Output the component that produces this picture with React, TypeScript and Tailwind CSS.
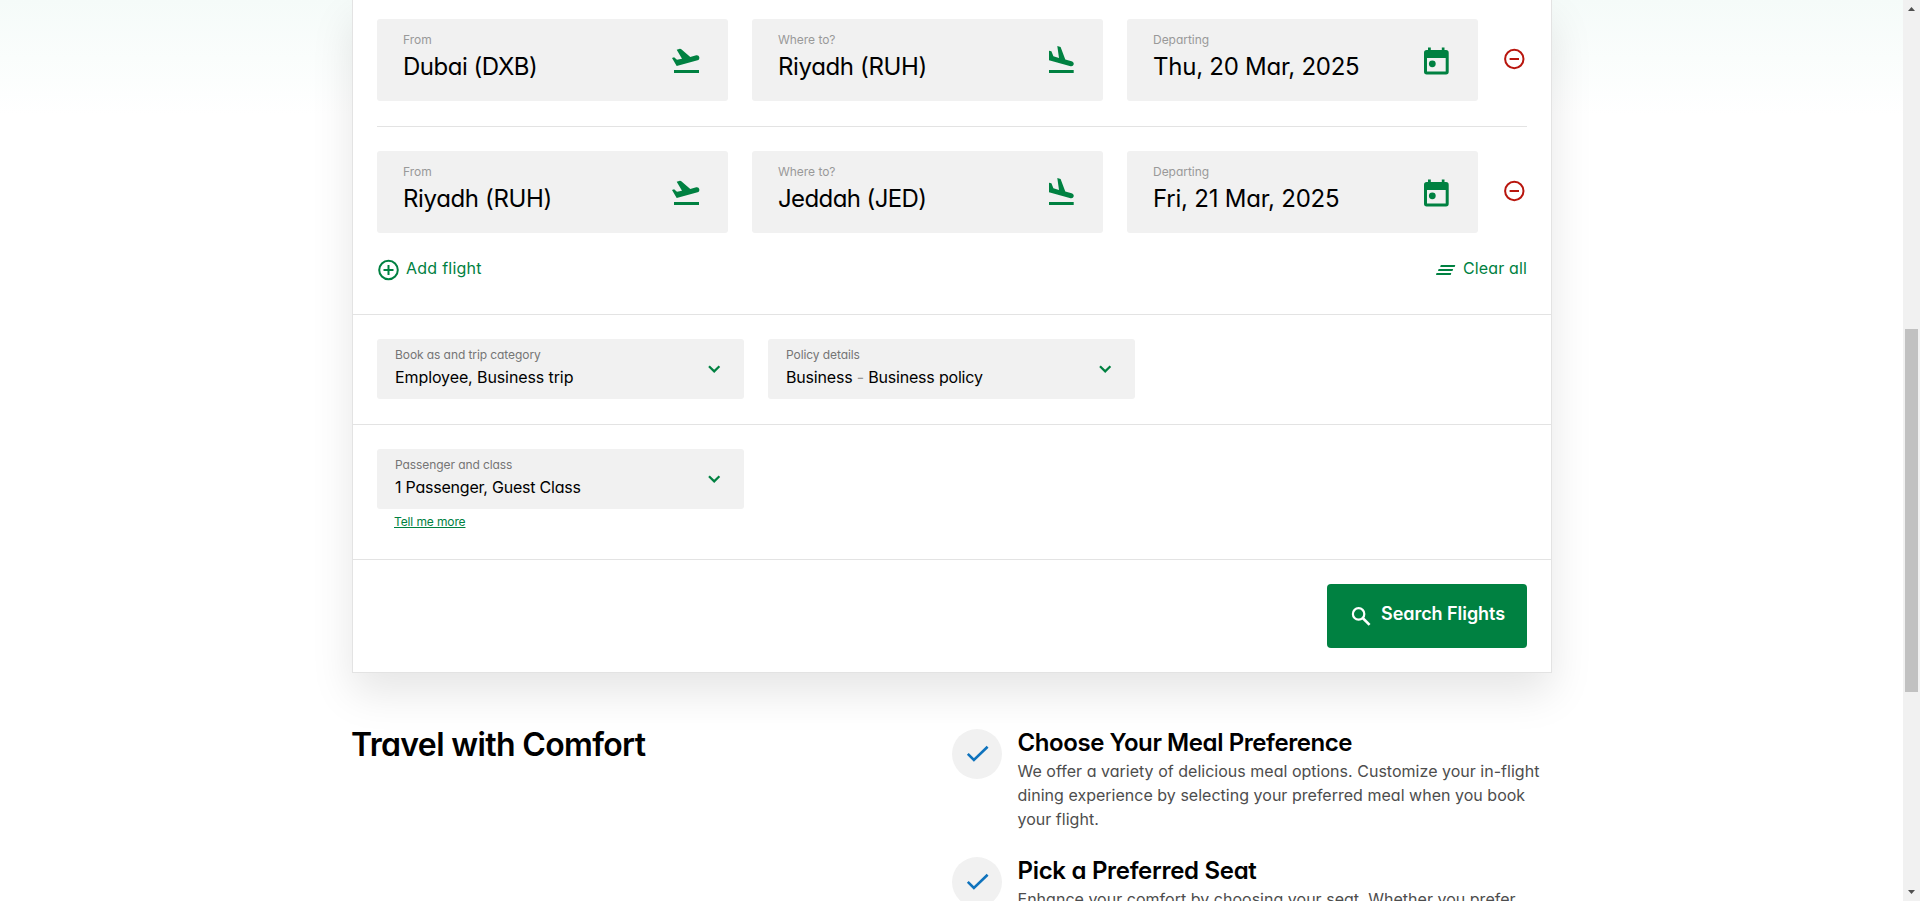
import type { ReactNode } from "react";

function TakeoffIcon() {
  return (
    <svg viewBox="0 0 32 32" className="size-8" fill="currentColor">
      <path d="M1 13L3.100 12.300L6 14.800L11 13.700L5.700 4.700L8.900 3.700L10 4L19.300 11.900L25.200 10.300C26.800 9.900 28 10.800 28.300 12.200C28.600 13.600 27.900 15 26.600 15.300L5.700 21z" />
      <path d="M3 25h25v3H3z" />
    </svg>
  );
}

function LandIcon() {
  return (
    <svg viewBox="0 0 32 32" className="size-8" fill="currentColor">
      <path d="M3 5.800L5.400 6.300L7.400 11.300L13 12.900L11.300 1L14.600 1.900L19.300 14.500L25.600 16.300C27.100 16.700 28 17.900 27.700 19.300C27.400 20.800 26 21.600 24.600 21.200L3 15.300z" />
      <path d="M3 25h24.700v3H3z" />
    </svg>
  );
}

function CalendarIcon() {
  return (
    <svg viewBox="0 0 32 32" className="size-8">
      <path
        fill="currentColor"
        fillRule="evenodd"
        d="M7 2.500h2.800V5h11V2.500h2.700V5h1.500a2.700 2.700 0 0 1 2.700 2.700v19a2.700 2.700 0 0 1-2.700 2.700H5.700A2.700 2.700 0 0 1 3 26.700v-19A2.700 2.700 0 0 1 5.700 5H7zM6 13v13.600h18.700V13z"
      />
      <circle cx="11.300" cy="18.800" r="3.400" fill="currentColor" />
    </svg>
  );
}

function RemoveIcon() {
  return (
    <svg viewBox="0 0 25 25" className="size-[25px]" fill="none" stroke="currentColor" strokeWidth="2">
      <circle cx="12.300" cy="13" r="9.200" />
      <path d="M7.600 13h9.400" />
    </svg>
  );
}

function AddIcon() {
  return (
    <svg viewBox="0 0 24 24" className="size-6" fill="none" stroke="currentColor" strokeWidth="2">
      <circle cx="12.500" cy="12" r="9.300" />
      <path d="M7.500 12h10M12.500 7v10" />
    </svg>
  );
}

function ClearIcon() {
  return (
    <svg viewBox="0 0 20 12" className="h-3 w-5" fill="currentColor">
      <path d="M4.800 1H19.300L18.700 3H4.200zM2.600 5H17.100L16.500 7H2zM.5 9H15.300L14.700 11H0z" />
    </svg>
  );
}

function ChevronIcon() {
  return (
    <svg viewBox="0 0 24 24" className="size-6" fill="none" stroke="currentColor" strokeWidth="2.200">
      <path d="M7 9.200L12.200 14.400L17.400 9.200" />
    </svg>
  );
}

function SearchIcon() {
  return (
    <svg viewBox="0 0 25 25" className="size-[25px]" fill="none" stroke="currentColor" strokeWidth="2.200">
      <circle cx="9.600" cy="9.900" r="5.700" />
      <path d="M13.700 14L20.600 20.900" strokeWidth="2.600" />
    </svg>
  );
}

function CheckIcon() {
  return (
    <svg viewBox="0 0 29 29" className="size-[29px]" fill="none" stroke="currentColor" strokeWidth="2.600">
      <path d="M4.800 13.800L10.900 20L24.600 6.800" />
    </svg>
  );
}

function Field({ label, value, spacing, icon }: { label: string; value: string; spacing: string; icon: ReactNode }) {
  return (
    <div className="flex h-[82px] w-[351px] items-start justify-between rounded-[3px] bg-[#f1f1f1] pr-[25px] pl-[26px]">
      <div className="pt-[13px] whitespace-nowrap">
        <div className="text-xs leading-4 tracking-[-0.03px] text-[#999]">{label}</div>
        <div className={`mt-[3px] text-2xl leading-8 text-black ${spacing}`}>{value}</div>
      </div>
      <div className="mt-[26px] text-[#008141]">{icon}</div>
    </div>
  );
}

type Leg = { from: string; to: string; date: string; fromSpacing: string; toSpacing: string; dateSpacing: string };

function FlightRow({ leg }: { leg: Leg }) {
  return (
    <div className="flex gap-6">
      <Field label="From" value={leg.from} spacing={leg.fromSpacing} icon={<TakeoffIcon />} />
      <Field label="Where to?" value={leg.to} spacing={leg.toSpacing} icon={<LandIcon />} />
      <Field label="Departing" value={leg.date} spacing={leg.dateSpacing} icon={<CalendarIcon />} />
      <button className="mt-[27px] h-[25px] text-[#b8150d]">
        <RemoveIcon />
      </button>
    </div>
  );
}

function Select({ label, value, spacing }: { label: string; value: ReactNode; spacing: string }) {
  return (
    <div className="flex h-[60px] w-[367px] items-start justify-between rounded-[3px] bg-[#f1f1f1] pr-[18px] pl-[18px]">
      <div className="pt-2 whitespace-nowrap">
        <div className="text-xs leading-4 tracking-[-0.08px] text-[#757575]">{label}</div>
        <div className={`mt-0.5 text-base leading-6 text-black ${spacing}`}>{value}</div>
      </div>
      <div className="mt-[18px] text-[#008141]">
        <ChevronIcon />
      </div>
    </div>
  );
}

function Feature({ title, spacing, lines }: { title: string; spacing: string; lines: string[] }) {
  return (
    <div className="flex gap-[15.5px] whitespace-nowrap">
      <div className="mt-[2px] flex size-[50px] shrink-0 items-center justify-center rounded-full bg-[#f1f1f1] text-[#0f73bd]">
        <CheckIcon />
      </div>
      <div>
        <h3 className={`text-2xl leading-8 font-semibold text-black ${spacing}`}>{title}</h3>
        <p className="text-base leading-6 tracking-[0.02px] text-[#4d4d4d]">
          {lines.map((line) => (
            <span key={line} className="block">
              {line}
            </span>
          ))}
        </p>
      </div>
    </div>
  );
}

export default function App() {
  return (
    <div className="flex h-[901px] w-[1920px] overflow-hidden bg-white font-['Inter','Liberation_Sans',sans-serif] [font-feature-settings:'cv11']">
      <div className="h-full w-[1903px] bg-[linear-gradient(to_bottom,#f5fbf9_0px,#ffffff_115px)]">
        <main className="ml-[352px] w-[1200px]">
          <section className="border-x border-b border-[#e3e3e3] bg-white shadow-[0_20px_40px_rgba(0,0,0,0.1)]">
            <div className="border-b border-[#e3e3e3] px-6 pt-[19px] pb-[34px]">
              <FlightRow
                leg={{
                  from: "Dubai (DXB)",
                  to: "Riyadh (RUH)",
                  date: "Thu, 20 Mar, 2025",
                  fromSpacing: "tracking-[-0.48px]",
                  toSpacing: "tracking-[-0.36px]",
                  dateSpacing: "tracking-[-0.25px]",
                }}
              />
              <div className="mt-[25px] mb-6 h-px bg-[#e3e3e3]" />
              <FlightRow
                leg={{
                  from: "Riyadh (RUH)",
                  to: "Jeddah (JED)",
                  date: "Fri, 21 Mar, 2025",
                  fromSpacing: "tracking-[-0.36px]",
                  toSpacing: "tracking-[-0.6px]",
                  dateSpacing: "tracking-[-0.22px]",
                }}
              />
              <div className="mt-[23px] flex h-6 justify-between text-base leading-6 text-[#008141]">
                <button className="-ml-px flex gap-1.5 tracking-[0.25px]">
                  <span className="mt-0.5">
                    <AddIcon />
                  </span>
                  Add flight
                </button>
                <button className="flex gap-[7px] tracking-[0.15px]">
                  <span className="mt-2">
                    <ClearIcon />
                  </span>
                  Clear all
                </button>
              </div>
            </div>
            <div className="flex gap-6 border-b border-[#e3e3e3] px-6 pt-6 pb-[25px]">
              <Select label="Book as and trip category" value="Employee, Business trip" spacing="tracking-[-0.1px]" />
              <Select
                label="Policy details"
                value={
                  <>
                    Business <span className="text-[#999]">-</span> Business policy
                  </>
                }
                spacing="tracking-[-0.19px]"
              />
            </div>
            <div className="border-b border-[#e3e3e3] px-6 pt-6 pb-[29px]">
              <Select label="Passenger and class" value="1 Passenger, Guest Class" spacing="tracking-[-0.22px]" />
              <a className="mt-[5px] ml-[17px] block w-fit text-xs leading-4 tracking-[-0.12px] text-[#008141] underline">
                Tell me more
              </a>
            </div>
            <div className="flex justify-end px-6 py-6">
              <button className="flex h-16 w-[200px] items-center gap-[7px] rounded-[4px] bg-[#008141] pl-[22px] whitespace-nowrap text-white">
                <SearchIcon />
                <span className="mb-1 text-lg leading-6 font-semibold tracking-[-0.05px]">Search Flights</span>
              </button>
            </div>
          </section>
          <section className="flex pt-[52px]">
            <h2 className="-ml-px w-[601px] text-[32px] leading-10 font-semibold tracking-[-0.65px] text-black">
              Travel with Comfort
            </h2>
            <div className="flex flex-col gap-6 pt-0.5">
              <Feature
                title="Choose Your Meal Preference"
                spacing="tracking-[-0.42px]"
                lines={[
                  "We offer a variety of delicious meal options. Customize your in-flight",
                  "dining experience by selecting your preferred meal when you book",
                  "your flight.",
                ]}
              />
              <Feature
                title="Pick a Preferred Seat"
                spacing="tracking-[-0.3px]"
                lines={["Enhance your comfort by choosing your seat. Whether you prefer"]}
              />
            </div>
          </section>
        </main>
      </div>
      <div className="flex h-full w-[17px] flex-col items-center justify-between bg-[#f1f1f1] pt-[7px] pb-[7px]">
        <svg viewBox="0 0 7 4" className="h-1 w-[7px]" fill="#505050">
          <path d="M0 4L3.500 0L7 4z" />
        </svg>
        <div className="mt-auto mb-[198px] h-[363px] w-[13px] bg-[#c1c1c1]" />
        <svg viewBox="0 0 7 4" className="h-1 w-[7px]" fill="#505050">
          <path d="M0 0L3.500 4L7 0z" />
        </svg>
      </div>
    </div>
  );
}
